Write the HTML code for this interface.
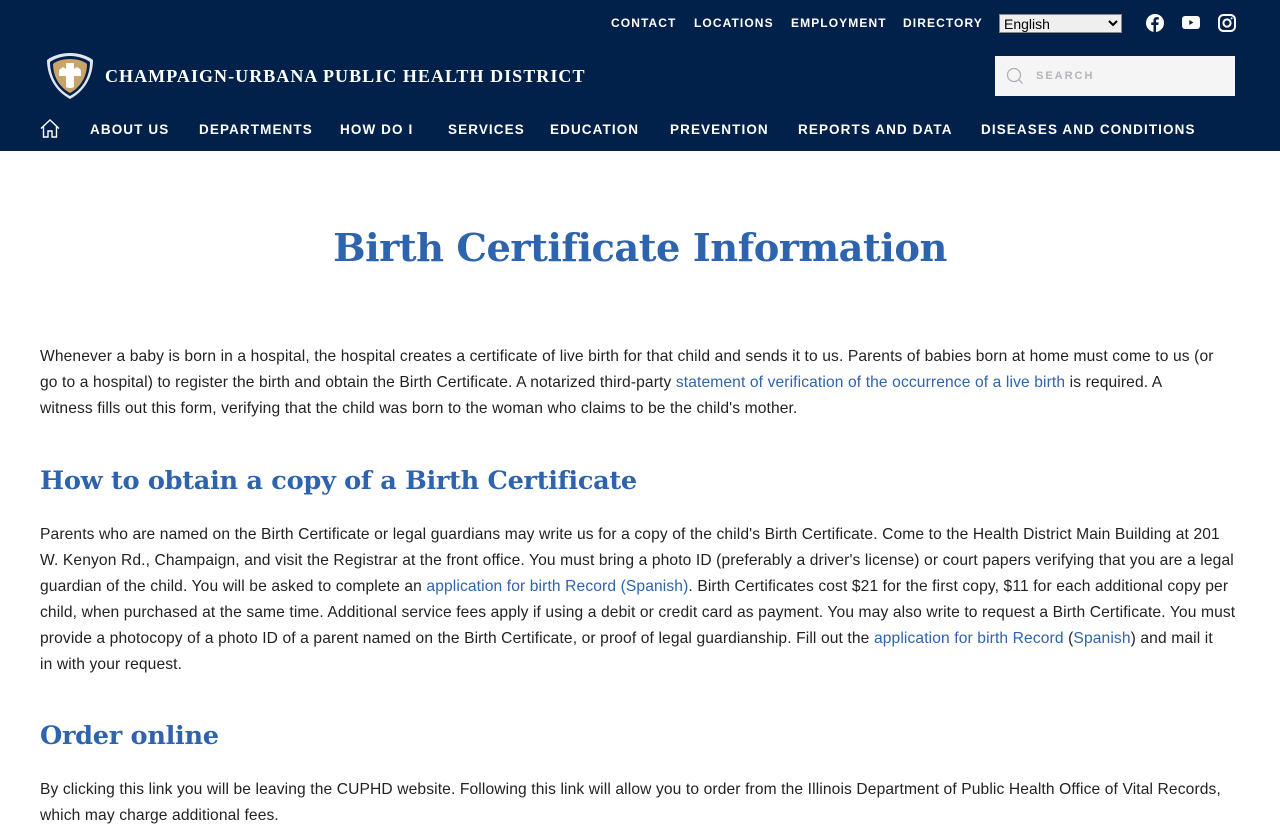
<!DOCTYPE html>
<html><head><meta charset="utf-8"><style>
*{margin:0;padding:0;box-sizing:border-box}
body{width:1280px;height:800px;overflow:hidden;font-family:"Liberation Sans",sans-serif;background:#fff;color:#222}
header{background:#02214a;height:151px;position:relative;color:#fff}
.top{position:absolute;top:16px;right:0;height:16px;font-size:12px;font-weight:bold;letter-spacing:1.1px}
.top a{position:absolute;top:0;color:#fff;text-decoration:none;white-space:nowrap}
select{position:absolute;left:999px;top:14px;width:123px;height:19px;font-size:14px;font-family:"Liberation Sans",sans-serif;border:1px solid #888}
.brand{position:absolute;left:105px;top:66px;font-family:"Liberation Serif",serif;font-weight:bold;font-size:18px;letter-spacing:1.05px}
.search{position:absolute;left:995px;top:56px;width:240px;height:40px;background:#f5f5f5}
.search span{position:absolute;left:41px;top:14px;font-size:11px;font-weight:bold;letter-spacing:2px;color:#b7b4bc}
nav a{position:absolute;top:122px;color:#fff;font-size:13.5px;font-weight:bold;letter-spacing:1.1px;white-space:nowrap;text-decoration:none}
main{padding:0 40px}
h1{font-family:"DejaVu Serif",serif;font-weight:bold;color:#2e63ad;font-size:38.4px;text-align:center;margin-top:75px;letter-spacing:-0.5px;line-height:46px}
h2{font-family:"DejaVu Serif",serif;font-weight:bold;color:#2e63ad;font-size:25.6px;line-height:34px;letter-spacing:-0.3px}
p{font-size:15.6px;line-height:26px;color:#222;letter-spacing:0.12px;white-space:nowrap}
a.l{color:#2e63ad;text-decoration:none}
</style></head><body>
<header>
<div class="top">
<a style="left:-669px">CONTACT</a><a style="left:-586px">LOCATIONS</a><a style="left:-489px">EMPLOYMENT</a><a style="left:-377px">DIRECTORY</a>
</div>
<select><option>English</option></select>
<svg style="position:absolute;left:1146px;top:14px" width="18" height="18" viewBox="0 0 18 18"><circle cx="9" cy="9" r="9" fill="#fff"/><path d="M10 18V11h2.3l.4-2.6H10V6.8c0-.8.3-1.3 1.4-1.3h1.4V3.2c-.3 0-1.1-.1-2-.1-2 0-3.3 1.2-3.3 3.4v1.9H5.2V11h2.3v7z" fill="#02214a"/></svg>
<svg style="position:absolute;left:1182px;top:16px" width="18" height="14" viewBox="0 0 18 14"><rect width="18" height="13" rx="3" fill="#fff"/><path d="M7.3 4v5l4.2-2.5z" fill="#02214a"/></svg>
<svg style="position:absolute;left:1218px;top:14px" width="18" height="18" viewBox="0 0 18 18"><rect x="1" y="1" width="16" height="16" rx="4.5" fill="none" stroke="#fff" stroke-width="2"/><circle cx="9" cy="9" r="3.6" fill="none" stroke="#fff" stroke-width="2"/><circle cx="13.6" cy="4.4" r="1" fill="#fff"/></svg>
<svg style="position:absolute;left:44px;top:51px" width="52" height="50" viewBox="0 0 52 50"><path d="M26 2C17 2 8 5 3 9c0 16 8 31 23 39 15-8 23-23 23-39C44 5 35 2 26 2z" fill="#dfe6ef"/><path d="M26 5C18 5 10 8 6 11c0 14 7 27 20 34 13-7 20-20 20-34C42 8 34 5 26 5z" fill="#02214a"/><path d="M26 8C19 8 12 10 9 13c0 12 6 23 17 29 11-6 17-17 17-29C40 10 33 8 26 8z" fill="#c9a46a"/><path d="M22 12h8v6l3-2 4 3v6h-7v11c-2 1-3 1-4 1s-2 0-4-1V25h-7v-6l4-3 3 2z" fill="#fff"/></svg>
<div class="brand">CHAMPAIGN-URBANA PUBLIC HEALTH DISTRICT</div>
<div class="search"><svg style="position:absolute;left:11px;top:11px" width="18" height="18" viewBox="0 0 18 18"><circle cx="8" cy="8" r="6.5" fill="none" stroke="#b0aeb6" stroke-width="1.3"/><path d="M12.6 12.6l4 4" stroke="#b0aeb6" stroke-width="1.3"/></svg><span>SEARCH</span></div>
<svg style="position:absolute;left:40px;top:119px" width="20" height="19" viewBox="0 0 20 19"><path d="M1 9.5L10 1l9 8.5M3.5 7.5V18h4.5v-6h4v6h4.5V7.5" fill="none" stroke="#fff" stroke-width="1.4"/></svg>
<nav><a style="left:90px">ABOUT US</a><a style="left:199px">DEPARTMENTS</a><a style="left:340px">HOW DO I</a><a style="left:448px">SERVICES</a><a style="left:550px">EDUCATION</a><a style="left:670px">PREVENTION</a><a style="left:798px">REPORTS AND DATA</a><a style="left:981px">DISEASES AND CONDITIONS</a></nav>
</header>
<main>
<h1>Birth Certificate Information</h1>
<p style="margin-top:72px">Whenever a baby is born in a hospital, the hospital creates a certificate of live birth for that child and sends it to us. Parents of babies born at home must come to us (or<br>go to a hospital) to register the birth and obtain the Birth Certificate. A notarized third-party <a class="l">statement of verification of the occurrence of a live birth</a> is required. A<br>witness fills out this form, verifying that the child was born to the woman who claims to be the child's mother.</p>
<h2 style="margin-top:42px">How to obtain a copy of a Birth Certificate</h2>
<p style="margin-top:24px">Parents who are named on the Birth Certificate or legal guardians may write us for a copy of the child's Birth Certificate. Come to the Health District Main Building at 201<br>W. Kenyon Rd., Champaign, and visit the Registrar at the front office. You must bring a photo ID (preferably a driver's license) or court papers verifying that you are a legal<br>guardian of the child. You will be asked to complete an <a class="l">application for birth Record (Spanish)</a>. Birth Certificates cost $21 for the first copy, $11 for each additional copy per<br>child, when purchased at the same time. Additional service fees apply if using a debit or credit card as payment. You may also write to request a Birth Certificate. You must<br>provide a photocopy of a photo ID of a parent named on the Birth Certificate, or proof of legal guardianship. Fill out the <a class="l">application for birth Record</a> (<a class="l">Spanish</a>) and mail it<br>in with your request.</p>
<h2 style="margin-top:41px">Order online</h2>
<p style="margin-top:24px">By clicking this link you will be leaving the CUPHD website. Following this link will allow you to order from the Illinois Department of Public Health Office of Vital Records,<br>which may charge additional fees.</p>
</main>
</body></html>
